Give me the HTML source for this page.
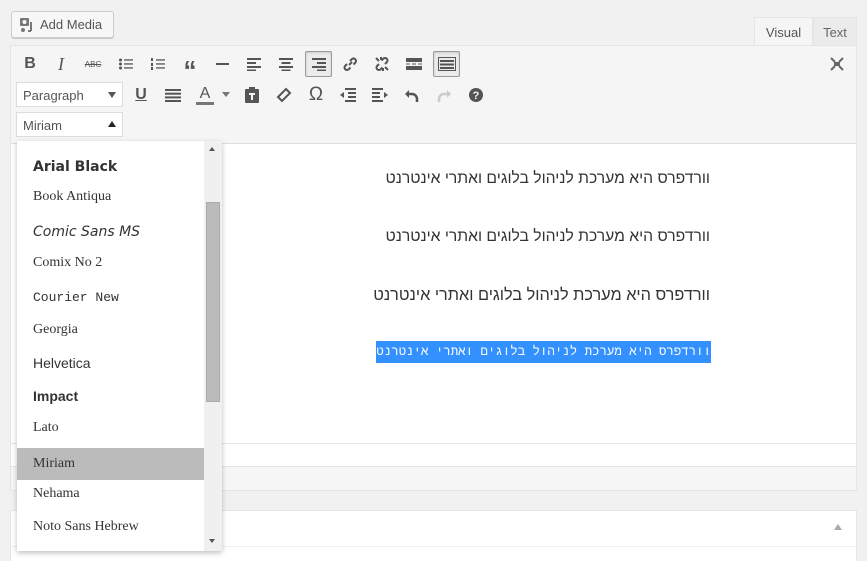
<!DOCTYPE html>
<html><head><meta charset="utf-8"><style>
*{box-sizing:border-box;margin:0;padding:0}
html,body{width:867px;height:561px;overflow:hidden}
body{background:#f1f1f1;font-family:"Liberation Sans",sans-serif;position:relative;color:#555}
.abs{position:absolute}
.btn{left:11px;top:11px;width:103px;height:27px;border:1px solid #ccc;border-radius:3px;background:#f7f7f7;font-size:13px;color:#555;padding:5px 0 0 28px;box-shadow:0 1px 0 #ccc}
.ed{left:10px;top:45px;width:847px;height:446px;border:1px solid #e5e5e5;background:#f5f5f5}
.tab{top:17px;height:30px;font-size:13px;padding-top:7px;text-align:center;border:1px solid #e5e5e5;border-bottom:none}
.ic{position:absolute;width:26px;height:26px;display:flex;align-items:center;justify-content:center;color:#555;font-size:16px}
.act{border:1px solid #999;background:#ebebeb;border-radius:2px;box-shadow:inset 0 1px 2px rgba(0,0,0,.15)}
.sel{position:absolute;left:16px;width:107px;height:25px;background:#fff;border:1px solid #ddd;font-size:13px;color:#555;padding:5px 0 0 6px}
.content{left:11px;top:143px;width:845px;height:300px;background:#fff;border-top:1px solid #ddd}
.he{position:absolute;font-family:"Liberation Sans","Noto Sans CJK SC",sans-serif;font-size:16px;color:#333;direction:rtl;white-space:nowrap}
.dd{left:17px;top:141px;width:205px;height:410px;background:#fff;box-shadow:0 2px 5px rgba(0,0,0,.25);overflow:hidden}
.it{position:absolute;left:0;width:187px;height:32px;padding-left:16px;font-size:14px;color:#333;line-height:32px}
.sb{position:absolute;left:187px;top:0;width:18px;height:410px;background:#f0f0f0}
</style></head><body>
<div class="abs btn"><svg class="abs" style="left:7px;top:5px" width="16" height="16" viewBox="0 0 16 16"><rect x="1" y="1" width="9" height="8" rx="1" fill="#777"/><circle cx="5.5" cy="5" r="2" fill="#f7f7f7"/><path d="M12 5v9M9 14h3" stroke="#777" stroke-width="2" fill="none"/><circle cx="4" cy="13" r="2" fill="#777"/></svg>Add Media</div>
<div class="abs tab" style="left:754px;width:59px;background:#f5f5f5;color:#555;height:30px">Visual</div>
<div class="abs tab" style="left:813px;width:44px;background:#ebebeb;color:#666;height:29px">Text</div>
<div class="abs ed"></div>
<div class="abs" style="left:0;top:0">
<div class="ic" style="left:17px;top:51px;font-weight:bold">B</div>
<div class="ic" style="left:48px;top:51px;font-style:italic;font-family:'Liberation Serif';font-size:18px">I</div>
<div class="ic" style="left:80px;top:51px;font-size:8px;text-decoration:line-through">ABC</div>
<div class="ic" style="left:113px;top:51px"><svg width="14" height="12"><g fill="#555"><circle cx="1.5" cy="2" r="1.5"/><circle cx="1.5" cy="6" r="1.5"/><circle cx="1.5" cy="10" r="1.5"/><rect x="5" y="1.3" width="9" height="1.3"/><rect x="5" y="5.3" width="9" height="1.3"/><rect x="5" y="9.3" width="9" height="1.3"/></g></svg></div>
<div class="ic" style="left:145px;top:51px"><svg width="14" height="12"><g fill="#555"><rect x="0" y="0" width="2" height="3"/><rect x="0" y="5" width="2" height="3"/><rect x="0" y="9" width="2" height="3"/><rect x="5" y="1.3" width="9" height="1.3"/><rect x="5" y="5.3" width="9" height="1.3"/><rect x="5" y="9.3" width="9" height="1.3"/></g></svg></div>
<div class="ic" style="left:177px;top:51px;font-size:26px;font-weight:bold;padding-top:12px">“</div>
<div class="ic" style="left:209px;top:51px"><div style="width:13px;height:2px;background:#555"></div></div>
<div class="ic" style="left:241px;top:51px"><svg width="14" height="13"><g fill="#555"><rect y="0" width="14" height="2"/><rect y="4" width="9" height="2"/><rect y="8" width="14" height="2"/><rect y="11.5" width="9" height="1.5"/></g></svg></div>
<div class="ic" style="left:273px;top:51px"><svg width="14" height="13"><g fill="#555"><rect y="0" width="14" height="2"/><rect x="2.5" y="4" width="9" height="2"/><rect y="8" width="14" height="2"/><rect x="2.5" y="11.5" width="9" height="1.5"/></g></svg></div>
<div class="ic act" style="left:305px;top:51px;width:27px"><svg width="14" height="13"><g fill="#555"><rect y="0" width="14" height="2"/><rect x="5" y="4" width="9" height="2"/><rect y="8" width="14" height="2"/><rect x="5" y="11.5" width="9" height="1.5"/></g></svg></div>
<div class="ic" style="left:337px;top:51px"><svg width="16" height="16"><path d="M7 9l3-3M5 8l-2 2a2.5 2.5 0 0 0 3.5 3.5l2-2M8 5l2-2a2.5 2.5 0 0 1 3.5 3.5l-2 2" stroke="#555" stroke-width="2" fill="none"/></svg></div>
<div class="ic" style="left:369px;top:51px"><svg width="16" height="16"><path d="M5 8l-2 2a2.5 2.5 0 0 0 3.5 3.5l2-2M11 8l2-2a2.5 2.5 0 0 0-3.5-3.5l-2 2M2 2l3 3M11 11l3 3M7 1v3M9 12v3" stroke="#555" stroke-width="2" fill="none"/></svg></div>
<div class="ic" style="left:401px;top:51px"><svg width="16" height="12"><g fill="#555"><rect width="16" height="4"/><rect y="8" width="16" height="4"/><rect x="0" y="5.5" width="4" height="1"/><rect x="6" y="5.5" width="4" height="1"/><rect x="12" y="5.5" width="4" height="1"/></g></svg></div>
<div class="ic act" style="left:433px;top:51px;width:27px"><svg width="18" height="14"><rect x=".5" y=".5" width="17" height="13" fill="none" stroke="#555"/><g fill="#555"><rect x="2" y="3" width="14" height="2"/><rect x="2" y="6.5" width="14" height="2"/><rect x="2" y="10" width="14" height="2"/></g></svg></div>
<div class="ic" style="left:824px;top:51px"><svg width="16" height="16"><g stroke="#666" stroke-width="2"><path d="M2 2l4 4M14 2l-4 4M2 14l4-4M14 14l-4-4"/></g><rect x="5" y="6" width="6" height="4" fill="#666"/></svg></div>
<div class="sel" style="top:82px">Paragraph<span class="abs" style="right:6px;top:9px;border:4px solid transparent;border-top:6px solid #555"></span></div>
<div class="ic" style="left:128px;top:82px;text-decoration:underline;font-weight:bold">U</div>
<div class="ic" style="left:160px;top:82px"><svg width="16" height="13"><g fill="#555"><rect width="16" height="2"/><rect y="3.7" width="16" height="2"/><rect y="7.4" width="16" height="2"/><rect y="11" width="16" height="2"/></g></svg></div>
<div class="ic" style="left:192px;top:82px;flex-direction:column;font-size:16px;line-height:15px">A<div style="width:18px;height:3px;background:#777;margin-top:1px"></div></div>
<span class="abs" style="left:222px;top:92px;border:4px solid transparent;border-top:5px solid #777"></span>
<div class="ic" style="left:239px;top:82px"><svg width="14" height="16"><rect y="2" width="14" height="14" rx="1" fill="#555"/><rect x="4" y="0" width="6" height="4" fill="#555"/><path d="M4 7h6M7 7v6" stroke="#f5f5f5" stroke-width="2"/></svg></div>
<div class="ic" style="left:271px;top:82px"><svg width="16" height="16"><path d="M10 2l4 4-8 8-4-4z" stroke="#555" stroke-width="2" fill="none"/></svg></div>
<div class="ic" style="left:303px;top:82px;font-size:19px">Ω</div>
<div class="ic" style="left:335px;top:82px"><svg width="16" height="14"><g fill="#555"><rect x="5" width="11" height="2"/><rect x="8" y="4" width="8" height="2"/><rect x="8" y="8" width="8" height="2"/><rect x="5" y="12" width="11" height="2"/><path d="M0 7l4-3v6z"/></g></svg></div>
<div class="ic" style="left:367px;top:82px"><svg width="16" height="14"><g fill="#555"><rect width="11" height="2"/><rect y="4" width="8" height="2"/><rect y="8" width="8" height="2"/><rect y="12" width="11" height="2"/><path d="M16 7l-4-3v6z"/></g></svg></div>
<div class="ic" style="left:399px;top:82px"><svg width="16" height="16"><path d="M5 3L1 7l4 4" fill="#555"/><path d="M3 7h5a5 5 0 0 1 5 5v3" stroke="#555" stroke-width="2.5" fill="none"/></svg></div>
<div class="ic" style="left:431px;top:82px"><svg width="16" height="16"><path d="M11 3l4 4-4 4" fill="#ccc"/><path d="M13 7H8a5 5 0 0 0-5 5v3" stroke="#ccc" stroke-width="2.5" fill="none"/></svg></div>
<div class="ic" style="left:463px;top:82px"><svg width="16" height="16"><circle cx="8" cy="8" r="7" fill="#555"/><text x="8" y="12" text-anchor="middle" font-size="11" font-weight="bold" fill="#f5f5f5" font-family="Liberation Sans">?</text></svg></div>
<div class="sel" style="top:112px">Miriam<span class="abs" style="right:6px;top:8px;border:4px solid transparent;border-bottom:6px solid #222;border-top:none"></span></div>
</div>
<div class="abs content">
<div class="he" style="top:26px;right:146px;font-size:15.7px">וורדפרס היא מערכת לניהול בלוגים ואתרי אינטרנט</div>
<div class="he" style="top:84px;right:146px;font-size:15.7px">וורדפרס היא מערכת לניהול בלוגים ואתרי אינטרנט</div>
<div class="he" style="top:142px;right:146px;font-size:16.3px">וורדפרס היא מערכת לניהול בלוגים ואתרי אינטרנט</div>
<div class="he" style="top:197px;right:145px;background:#3390ff;color:#fff;font-family:'Liberation Mono','DejaVu Sans Mono',monospace;font-size:12.4px;line-height:22px">וורדפרס היא מערכת לניהול בלוגים ואתרי אינטרנט</div>
</div>
<div class="abs" style="left:11px;top:443px;width:845px;height:23px;background:#fff;border-top:1px solid #e5e5e5"></div>
<div class="abs" style="left:11px;top:466px;width:845px;height:24px;background:#f6f6f6;border-top:1px solid #e5e5e5"></div>
<div class="abs" style="left:10px;top:510px;width:847px;height:51px;background:#fff;border:1px solid #e5e5e5;border-bottom:none"></div>
<div class="abs" style="left:11px;top:546px;width:845px;height:1px;background:#eee"></div>
<span class="abs" style="left:834px;top:524px;border:4px solid transparent;border-bottom:6px solid #aaa;border-top:none"></span>
<div class="abs dd">
<div class="it" style="top:10px;font-family:'DejaVu Sans';font-weight:bold;font-size:14px">Arial Black</div>
<div class="it" style="top:40px;font-family:'Liberation Serif'">Book Antiqua</div>
<div class="it" style="top:75px;font-family:'DejaVu Sans';font-style:italic;font-size:14px">Comic Sans MS</div>
<div class="it" style="top:106px;font-family:'Liberation Serif'">Comix No 2</div>
<div class="it" style="top:141px;font-family:'Liberation Mono';font-size:13px">Courier New</div>
<div class="it" style="top:173px;font-family:'Liberation Serif'">Georgia</div>
<div class="it" style="top:206px;font-family:'Liberation Sans'">Helvetica</div>
<div class="it" style="top:239px;font-family:'Liberation Sans Narrow','Liberation Sans';font-weight:bold;font-size:14px">Impact</div>
<div class="it" style="top:271px;font-family:'Liberation Serif'">Lato</div>
<div class="it" style="top:307px;font-family:'Liberation Serif';background:#bbb">Miriam</div>
<div class="it" style="top:337px;font-family:'Liberation Serif'">Nehama</div>
<div class="it" style="top:370px;font-family:'Liberation Serif'">Noto Sans Hebrew</div>
<div class="sb"><span class="abs" style="left:5px;top:6px;border:3.5px solid transparent;border-bottom:4px solid #555;border-top:none"></span>
<div class="abs" style="left:2px;top:61px;width:14px;height:200px;background:#bbb;border:1px solid #aaa"></div>
<span class="abs" style="left:5px;top:398px;border:3.5px solid transparent;border-top:4px solid #555;border-bottom:none"></span></div>
</div>
</body></html>
